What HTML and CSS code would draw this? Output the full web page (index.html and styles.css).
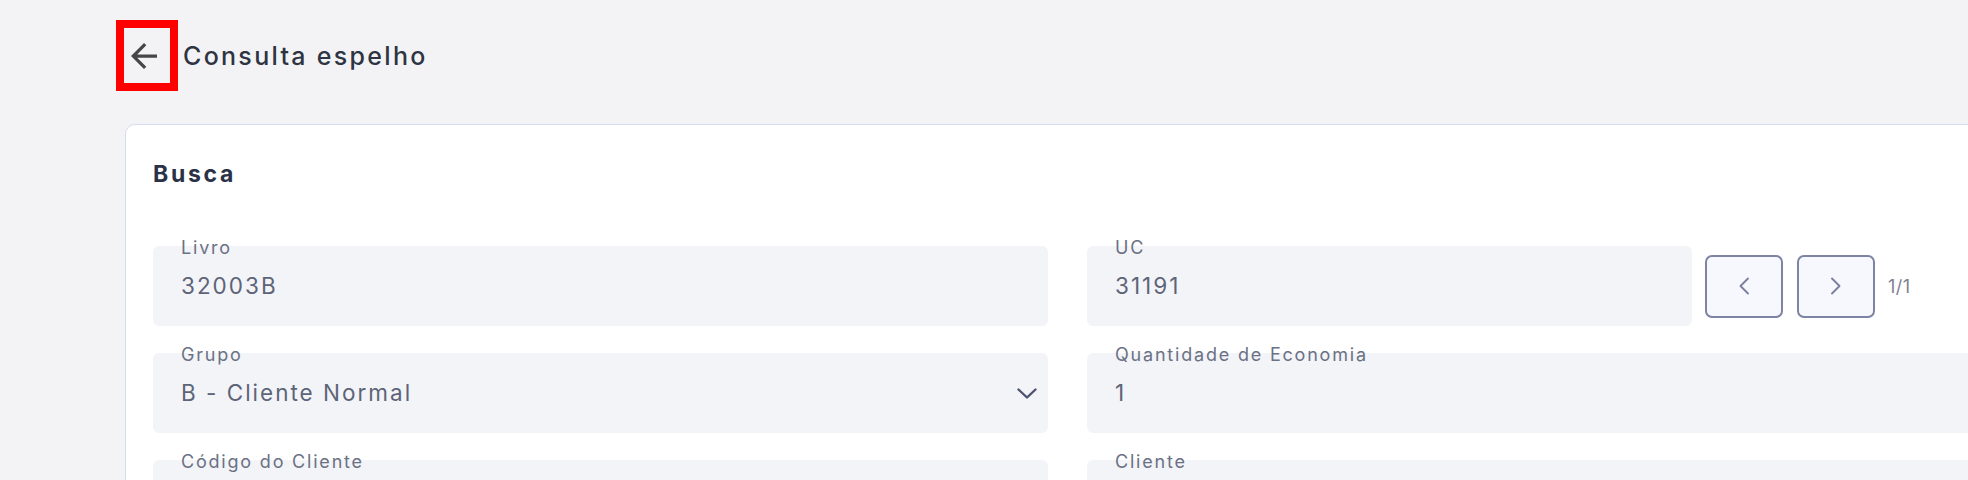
FILE: index.html
```html
<!DOCTYPE html>
<html lang="pt-BR">
<head>
<meta charset="utf-8">
<title>Consulta espelho</title>
<link rel="stylesheet" href="styles.css">
</head>
<body>
<div class="page">
  <header class="topbar">
    <button class="back-btn" type="button" aria-label="Voltar">
      <svg class="back-icon" viewBox="4 4 16 16" width="26" height="26"><path d="M20 11H7.83l5.59-5.59L12 4l-8 8 8 8 1.41-1.41L7.83 13H20v-2z"/></svg>
    </button>
    <h1 class="page-title">Consulta espelho</h1>
  </header>

  <section class="card">
    <h2 class="card-title">Busca</h2>
    <div class="form-grid">
      <div class="field">
        <span class="field-label">Livro</span>
        <span class="field-value">32003B</span>
      </div>
      <div class="field-row">
        <div class="field">
          <span class="field-label">UC</span>
          <span class="field-value">31191</span>
        </div>
        <div class="pager">
          <button class="pager-btn" type="button" aria-label="Anterior">
            <svg viewBox="0 0 12 18" width="12" height="18"><path d="M10 1.5 2.5 9l7.5 7.5"/></svg>
          </button>
          <button class="pager-btn pager-next" type="button" aria-label="Próximo">
            <svg viewBox="0 0 12 18" width="12" height="18"><path d="M2 1.5 9.5 9 2 16.5"/></svg>
          </button>
          <span class="pager-count">1/1</span>
        </div>
      </div>
      <div class="field field-select">
        <span class="field-label">Grupo</span>
        <span class="field-value">B - Cliente Normal</span>
        <svg class="select-chevron" viewBox="0 0 20 11" width="20" height="11"><path d="M1.5 1.5 10 9.5l8.5-8"/></svg>
      </div>
      <div class="field">
        <span class="field-label">Quantidade de Economia</span>
        <span class="field-value">1</span>
      </div>
      <div class="field">
        <span class="field-label">Código do Cliente</span>
        <span class="field-value"></span>
      </div>
      <div class="field">
        <span class="field-label">Cliente</span>
        <span class="field-value"></span>
      </div>
    </div>
  </section>
</div>
</body>
</html>
```

FILE: styles.css
```css
html, body {
  margin: 0;
  padding: 0;
}

body {
  width: 1968px;
  height: 480px;
  overflow: hidden;
  background: #f3f3f6;
  font-family: Inter, "Open Sans", sans-serif;
}

.page {
  display: flex;
  flex-direction: column;
}

.topbar {
  display: flex;
  align-items: center;
  gap: 5px;
  padding: 20px 0 0 116px;
}

.back-btn {
  box-sizing: border-box;
  width: 62px;
  height: 71px;
  border: 8px solid #ff0000;
  background: transparent;
  padding: 0 0 0 7px;
  margin: 0;
  display: flex;
  align-items: center;
  justify-content: flex-start;
  cursor: pointer;
}

.back-icon {
  fill: #464646;
  display: block;
}

.page-title {
  margin: 0;
  font-size: 25px;
  line-height: 30px;
  font-weight: 500;
  letter-spacing: 2.3px;
  color: #2e3441;
}

.card {
  box-sizing: border-box;
  width: 1885px;
  margin: 33px 0 0 125px;
  padding: 35px 27px 40px;
  background: #ffffff;
  border: 1px solid #d6dcef;
  border-radius: 10px;
}

.card-title {
  margin: 0 0 58px;
  font-size: 23px;
  line-height: 28px;
  font-weight: 700;
  letter-spacing: 2.7px;
  color: #2b3147;
}

.form-grid {
  display: grid;
  grid-template-columns: 895px 895px;
  grid-auto-rows: 80px;
  column-gap: 39px;
  row-gap: 27px;
}

.field {
  position: relative;
  display: flex;
  align-items: center;
  padding: 0 28px;
  background: #f3f4f8;
  border-radius: 6px;
  min-width: 0;
}

.field-label {
  position: absolute;
  left: 28px;
  top: -9px;
  font-size: 18px;
  line-height: 22px;
  letter-spacing: 1.8px;
  color: #6b7184;
  white-space: nowrap;
}

.field-value {
  font-size: 22.5px;
  line-height: 28px;
  letter-spacing: 2px;
  color: #5d6478;
  white-space: nowrap;
}

.field-select {
  padding-right: 11px;
}

.select-chevron {
  margin-left: auto;
  fill: none;
  stroke: #4c5270;
  stroke-width: 2.4;
  stroke-linecap: round;
  stroke-linejoin: round;
}

.field-row {
  display: flex;
  align-items: stretch;
}

.field-row .field {
  flex: 1 1 auto;
}

.pager {
  flex: 0 0 277px;
  display: flex;
  align-items: center;
  margin-left: 13px;
}

.pager-btn {
  box-sizing: border-box;
  width: 78px;
  height: 63px;
  margin: 0;
  padding: 0;
  display: flex;
  align-items: center;
  justify-content: center;
  background: #f6f8fe;
  border: 2px solid #7e84a3;
  border-radius: 7px;
  cursor: pointer;
}

.pager-btn svg {
  fill: none;
  stroke: #7a809e;
  stroke-width: 1.9;
  stroke-linecap: round;
  stroke-linejoin: round;
}

.pager-next {
  margin-left: 14px;
}

.pager-count {
  margin-left: 13px;
  font-size: 18px;
  letter-spacing: 0.5px;
  color: #7e8190;
}
```
